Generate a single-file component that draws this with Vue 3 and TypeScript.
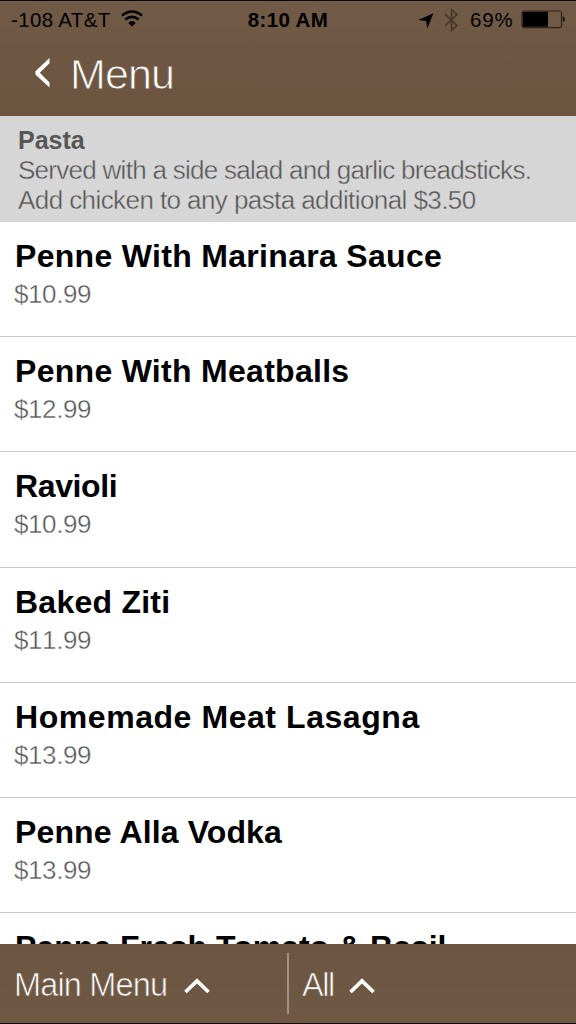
<script setup lang="ts">
interface MenuItem {
  name: string
  price?: string
  tracking: number
}

const items: MenuItem[] = [
  { name: 'Penne With Marinara Sauce', price: '$10.99', tracking: 0.31 },
  { name: 'Penne With Meatballs', price: '$12.99', tracking: 0.29 },
  { name: 'Ravioli', price: '$10.99', tracking: -0.38 },
  { name: 'Baked Ziti', price: '$11.99', tracking: 0.24 },
  { name: 'Homemade Meat Lasagna', price: '$13.99', tracking: 0.56 },
  { name: 'Penne Alla Vodka', price: '$13.99', tracking: 0.12 },
  { name: 'Penne Fresh Tomato & Basil', tracking: 0 },
]
</script>

<template>
  <div class="screen">
    <header class="header">
      <div class="status">
        <div class="carrier">
          <span class="signal">-108 AT&amp;T</span>
          <svg class="wifi" width="22" height="17" viewBox="0 0 22 17">
            <path d="M1 5.6 Q11 -2.6 21 5.6" fill="none" stroke="#000" stroke-width="2.5" />
            <path d="M4.3 9.6 Q11 4 17.7 9.6" fill="none" stroke="#000" stroke-width="2.6" />
            <path d="M7.3 12.9 Q11 9.2 14.7 12.9 L11 16.4 Z" fill="#000" />
          </svg>
        </div>
        <div class="clock">8:10 AM</div>
        <div class="indicators">
          <svg class="location" width="16" height="16" viewBox="0 0 16 16">
            <path d="M15.5 .3 L9.2 15.4 L8.1 8 L.4 7 Z" fill="#000" />
          </svg>
          <svg class="bluetooth" width="15" height="24" viewBox="0 0 15 24">
            <path d="M1 6.2 L13 17.4 L7.6 22.3 V1.7 L13 6.6 L1 17.8" fill="none" stroke="#453629" stroke-width="1.6" />
          </svg>
          <span class="percent">69%</span>
          <svg class="battery" width="45" height="19" viewBox="0 0 45 19">
            <rect x="1" y="1" width="39.5" height="16.6" rx="2" fill="none" stroke="#30251c" stroke-width="1.2" />
            <rect x="1.7" y="1.8" width="25.3" height="15" rx=".8" fill="#000" />
            <path d="M41.8 6.3 Q43.8 6.8 43.8 9.3 T41.8 12.3 Z" fill="#17110c" />
          </svg>
        </div>
      </div>
      <div class="title-bar">
        <svg class="back" width="18" height="32" viewBox="0 0 18 32">
          <path d="M15.5 1 V6.2 L5.8 15.8 L15.5 25.4 V30.6 L1.4 17.5 V14.2 Z" fill="#fff" />
        </svg>
        <h1 class="title">Menu</h1>
      </div>
    </header>

    <section class="category">
      <h2>Pasta</h2>
      <p class="serving">Served with a side salad and garlic breadsticks.</p>
      <p class="extra">Add chicken to any pasta additional $3.50</p>
    </section>

    <main class="list">
      <article v-for="item in items" :key="item.name" class="item">
        <h3 :style="{ letterSpacing: item.tracking + 'px' }">{{ item.name }}</h3>
        <p v-if="item.price">{{ item.price }}</p>
      </article>
    </main>

    <footer class="footer">
      <button class="tab main-tab">
        <span>Main Menu</span>
        <svg width="28" height="18" viewBox="0 0 28 18">
          <path d="M2.5 15 L14 4 L25.5 15" fill="none" stroke="#fff" stroke-width="3.8" />
        </svg>
      </button>
      <button class="tab all-tab">
        <span>All</span>
        <svg width="28" height="18" viewBox="0 0 28 18">
          <path d="M2.5 15 L14 4 L25.5 15" fill="none" stroke="#fff" stroke-width="3.8" />
        </svg>
      </button>
    </footer>
  </div>
</template>

<style>
body {
  margin: 0;
}
</style>

<style scoped>
.screen {
  width: 576px;
  height: 1024px;
  display: flex;
  flex-direction: column;
  overflow: hidden;
  background: #fff;
  font-family: "Liberation Sans", Arial, sans-serif;
  white-space: nowrap;
}

h1, h2, h3, p {
  margin: 0;
}

.header {
  flex: none;
  box-sizing: border-box;
  height: 116px;
  border-top: 1px solid #0d0706;
  background: linear-gradient(#715a46, #6c543f);
}

.status {
  display: grid;
  grid-template-columns: 1fr 82px 1fr;
  height: 38px;
  line-height: 38px;
  font-size: 20.5px;
  color: #000;
}

.carrier, .indicators {
  display: flex;
  align-items: center;
}

.signal {
  margin-left: 11px;
  width: 99px;
  letter-spacing: .35px;
}

.wifi {
  margin: 0 0 3px 11px;
}

.clock {
  font-weight: bold;
  letter-spacing: .35px;
  text-align: center;
}

.indicators {
  padding-left: 89px;
}

.location {
  flex: none;
  margin: 1px 10px 0 0;
}

.bluetooth {
  flex: none;
  margin: 0 11px 1px 0;
}

.percent {
  width: 44px;
  letter-spacing: .8px;
}

.battery {
  flex: none;
  margin: 0 0 1px 7px;
}

.title-bar {
  display: flex;
  padding: 11px 0 0 34px;
}

.back {
  margin-top: 7px;
}

.title {
  margin: -1px 0 0 18px;
  font-size: 43px;
  line-height: 50px;
  font-weight: normal;
  letter-spacing: -.9px;
  color: #fff;
  -webkit-text-stroke: .9px #6f5843;
}

.category {
  flex: none;
  box-sizing: border-box;
  height: 106px;
  padding: 9px 18px 0;
  background: #d6d6d6;
  color: #565656;
  font-size: 26px;
  line-height: 30px;
}

.category h2 {
  font-size: 25px;
  line-height: 30px;
}

.category p {
  -webkit-text-stroke: .4px #d6d6d6;
}

.serving {
  letter-spacing: -.72px;
}

.extra {
  letter-spacing: -.58px;
}

.list {
  flex: 1;
  min-height: 0;
  overflow: hidden;
}

.item {
  box-sizing: border-box;
  height: 115.2px;
  padding: 15px 14px 0;
  border-bottom: 1px solid #c8c8c8;
}

.item h3 {
  margin-left: 1px;
  font-size: 32px;
  line-height: 38px;
  color: #000;
}

.item p {
  margin-top: 1px;
  font-size: 26px;
  line-height: 36px;
  letter-spacing: -.4px;
  font-kerning: none;
  color: #565656;
  -webkit-text-stroke: .4px #fff;
}

.footer {
  flex: none;
  box-sizing: border-box;
  height: 80px;
  display: grid;
  grid-template-columns: 289px 1fr;
  border-bottom: 1px solid #120a06;
  background: linear-gradient(#6c5541, #705944);
}

.tab {
  position: relative;
  display: flex;
  align-items: center;
  padding: 4px 0 0 14px;
  border: 0;
  background: none;
  font: 32.5px "Liberation Sans", Arial, sans-serif;
  letter-spacing: -.85px;
  color: #fff;
}

.tab span {
  -webkit-text-stroke: .7px #6e5743;
}

.main-tab span {
  width: 155px;
  text-align: left;
}

.main-tab::after {
  content: "";
  position: absolute;
  right: 0;
  top: 9px;
  width: 2px;
  height: 61px;
  background: #a0948a;
}

.all-tab {
  padding-left: 13px;
}

.all-tab span {
  width: 33px;
  letter-spacing: -1.4px;
  text-align: left;
}

.tab svg {
  margin-left: 14px;
}

.all-tab svg {
  margin-left: 13px;
}
</style>
